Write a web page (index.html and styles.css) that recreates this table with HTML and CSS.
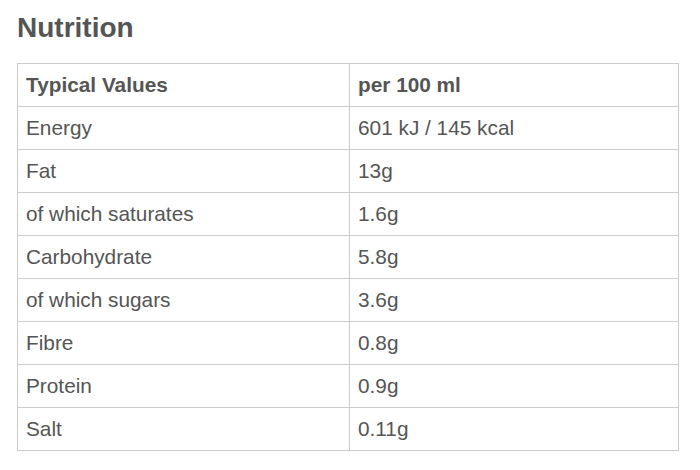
FILE: index.html
```html
<!DOCTYPE html>
<html>
<head>
<meta charset="utf-8">
<link rel="stylesheet" href="styles.css">
</head>
<body>
<h2 class="title">Nutrition</h2>
<table class="nutri">
  <thead>
    <tr><th>Typical Values</th><th>per 100 ml</th></tr>
  </thead>
  <tbody>
    <tr><td>Energy</td><td>601 kJ / 145 kcal</td></tr>
    <tr><td>Fat</td><td>13g</td></tr>
    <tr><td>of which saturates</td><td>1.6g</td></tr>
    <tr><td>Carbohydrate</td><td>5.8g</td></tr>
    <tr><td>of which sugars</td><td>3.6g</td></tr>
    <tr><td>Fibre</td><td>0.8g</td></tr>
    <tr><td>Protein</td><td>0.9g</td></tr>
    <tr><td>Salt</td><td>0.11g</td></tr>
  </tbody>
</table>
</body>
</html>
```
FILE: styles.css
```css
html, body { margin: 0; padding: 0; background: #fff; }
body {
  font-family: "Liberation Sans", Arial, sans-serif;
  color: #555;
  padding: 12px 17px 0 17px;
}
.title {
  margin: 0 0 19px 0;
  font-size: 28px;
  font-weight: bold;
  line-height: 32px;
  color: #555;
}
.nutri {
  border-collapse: collapse;
  width: 662px;
  font-size: 20.8px;
}
.nutri th, .nutri td {
  border: 1px solid #ccc;
  text-align: left;
  padding: 0 8px 2px 8px;
  height: 40px;
  line-height: 23px;
  vertical-align: middle;
}
.nutri th:first-child, .nutri td:first-child { width: 315px; }
.nutri th { font-weight: bold; }
```
